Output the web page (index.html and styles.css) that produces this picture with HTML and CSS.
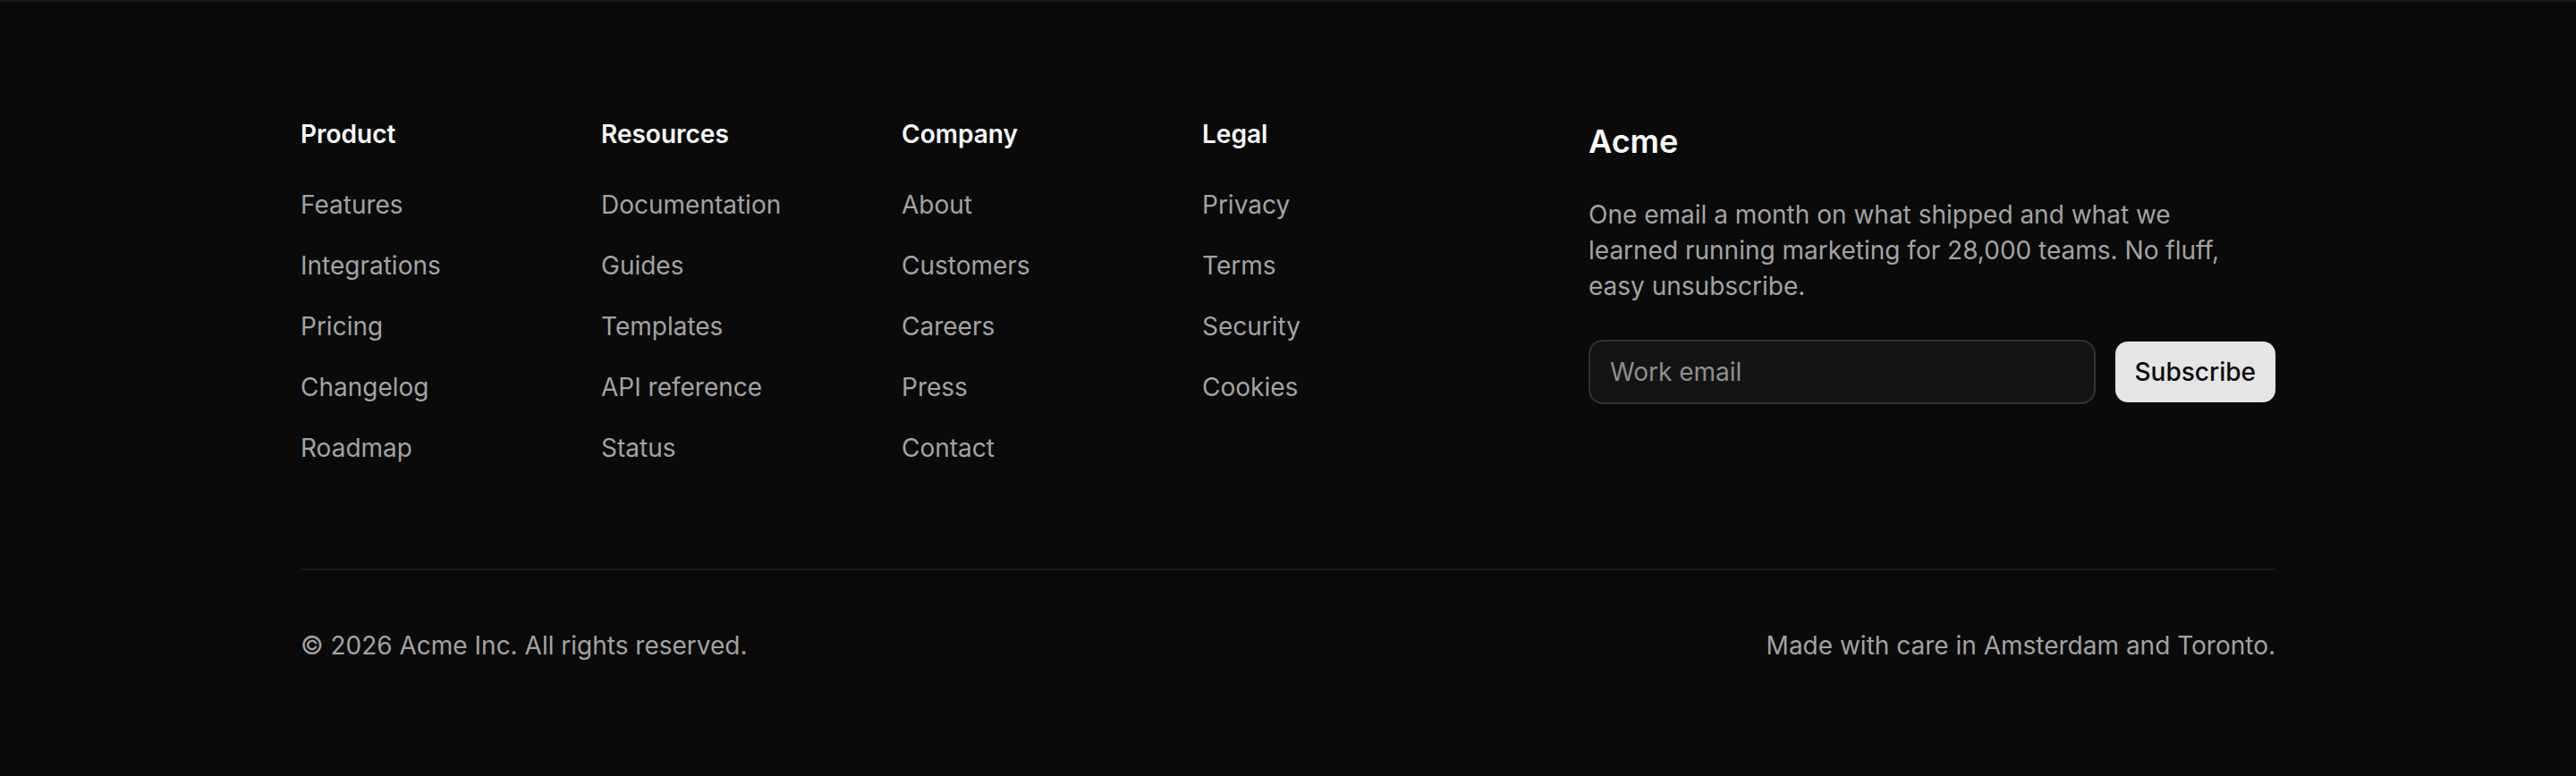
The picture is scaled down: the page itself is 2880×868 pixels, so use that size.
FILE: index.html
```html
<!DOCTYPE html>
<html lang="en">
<head>
  <meta charset="UTF-8">
  <meta name="viewport" content="width=device-width, initial-scale=1.0">
  <title>Acme - Footer</title>
  <link rel="stylesheet" href="styles.css">
</head>
<body>
  <footer class="site-footer">
    <div class="footer-inner">
      <div class="footer-top">
        <nav class="footer-links">
          <div class="footer-col">
            <h4>Product</h4>
            <ul>
              <li><a href="#">Features</a></li>
              <li><a href="#">Integrations</a></li>
              <li><a href="#">Pricing</a></li>
              <li><a href="#">Changelog</a></li>
              <li><a href="#">Roadmap</a></li>
            </ul>
          </div>
          <div class="footer-col">
            <h4>Resources</h4>
            <ul>
              <li><a href="#">Documentation</a></li>
              <li><a href="#">Guides</a></li>
              <li><a href="#">Templates</a></li>
              <li><a href="#">API reference</a></li>
              <li><a href="#">Status</a></li>
            </ul>
          </div>
          <div class="footer-col">
            <h4>Company</h4>
            <ul>
              <li><a href="#">About</a></li>
              <li><a href="#">Customers</a></li>
              <li><a href="#">Careers</a></li>
              <li><a href="#">Press</a></li>
              <li><a href="#">Contact</a></li>
            </ul>
          </div>
          <div class="footer-col">
            <h4>Legal</h4>
            <ul>
              <li><a href="#">Privacy</a></li>
              <li><a href="#">Terms</a></li>
              <li><a href="#">Security</a></li>
              <li><a href="#">Cookies</a></li>
            </ul>
          </div>
        </nav>

        <div class="newsletter">
          <h3>Acme</h3>
          <p>One email a month on what shipped and what we learned running marketing for 28,000 teams. No fluff, easy unsubscribe.</p>
          <form class="subscribe-form" onsubmit="return false;">
            <input type="email" placeholder="Work email">
            <button type="submit">Subscribe</button>
          </form>
        </div>
      </div>

      <div class="footer-bottom">
        <span>&copy; 2026 Acme Inc. All rights reserved.</span>
        <span>Made with care in Amsterdam and Toronto.</span>
      </div>
    </div>
  </footer>
</body>
</html>
```

FILE: styles.css
```css
/* Reset */
* {
  margin: 0;
  padding: 0;
  box-sizing: border-box;
}

body {
  font-family: "Inter", "Noto Sans", sans-serif;
  background: #0a0a0a;
  color: #a3a3a3;
}

.site-footer {
  border-top: 2px solid #1c1c1c;
}

.footer-inner {
  max-width: 2400px;
  margin: 0 auto;
  padding: 128px 96px 126px;
}

.footer-top {
  display: grid;
  grid-template-columns: 1fr 768px;
  gap: 96px;
  padding-bottom: 113px;
  border-bottom: 2px solid #1c1c1c;
}

.footer-links {
  display: grid;
  grid-template-columns: repeat(4, 1fr);
}

.footer-col h4 {
  font-size: 28px;
  line-height: 40px;
  font-weight: 600;
  color: #fafafa;
  margin-bottom: 37px;
}

.footer-col ul {
  list-style: none;
  display: flex;
  flex-direction: column;
  gap: 24px;
}

.footer-col li {
  font-size: 28px;
  line-height: 44px;
}

.footer-col a {
  color: #a3a3a3;
  text-decoration: none;
}

.newsletter h3 {
  font-size: 36px;
  line-height: 56px;
  font-weight: 600;
  color: #fafafa;
  margin-bottom: 34px;
}

.newsletter p {
  font-size: 28px;
  line-height: 40px;
  max-width: 720px;
  margin-bottom: 40px;
}

.subscribe-form {
  display: flex;
  align-items: center;
  gap: 22px;
}

.subscribe-form input {
  flex: 1;
  min-width: 0;
  height: 72px;
  padding: 0 22px;
  background: #141414;
  border: 2px solid #333333;
  border-radius: 16px;
  font-family: inherit;
  font-size: 28px;
  color: #fafafa;
  outline: none;
}

.subscribe-form input::placeholder {
  color: #8f8f8f;
}

.subscribe-form button {
  height: 68px;
  padding: 0 22px;
  background: #e5e5e5;
  color: #0a0a0a;
  border: none;
  border-radius: 14px;
  font-family: inherit;
  font-size: 28px;
  font-weight: 500;
  cursor: pointer;
}

.footer-bottom {
  display: flex;
  justify-content: space-between;
  padding-top: 64px;
  font-size: 28px;
  line-height: 40px;
}
```
